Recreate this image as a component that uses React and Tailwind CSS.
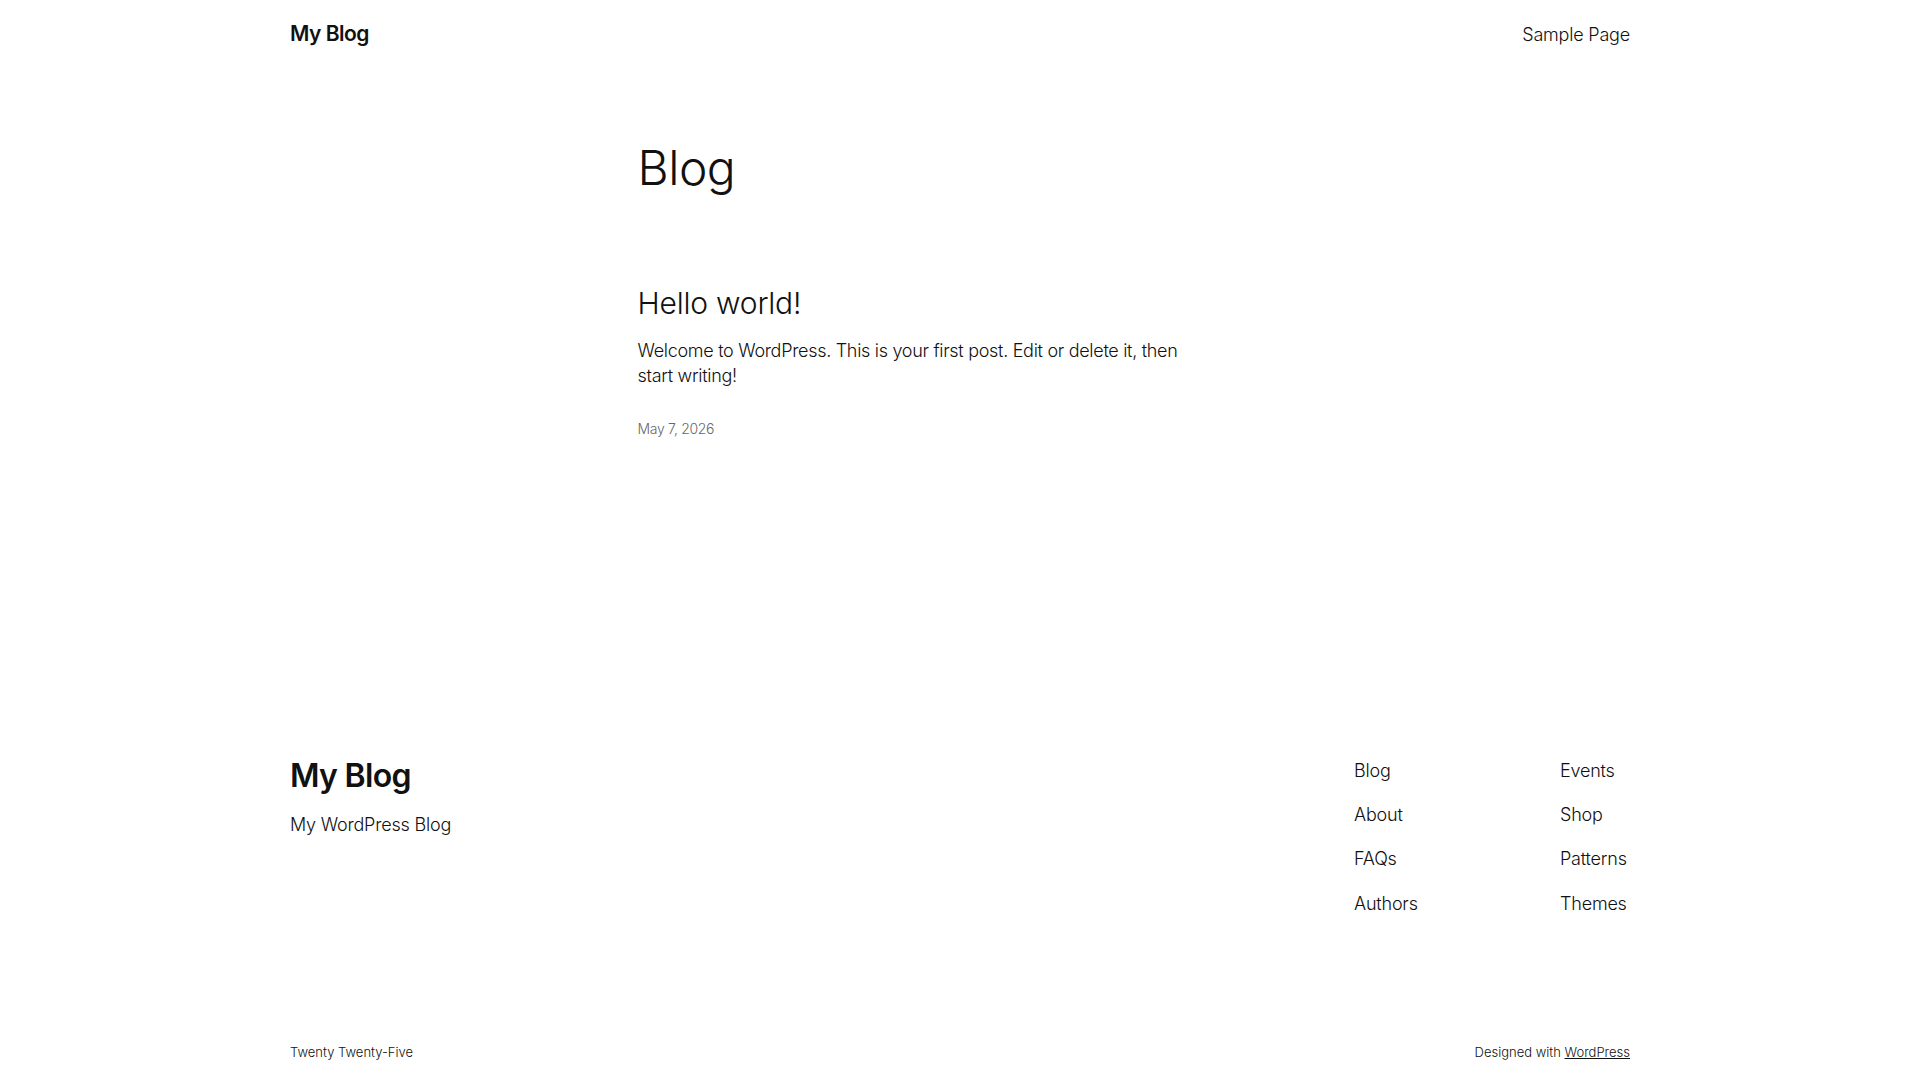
export default function App() {
  const font = { fontFamily: 'Inter, "Noto Sans", sans-serif' };
  return (
    <div className="min-h-screen bg-white text-[#111111] font-light" style={font}>
      <header className="mx-auto flex h-[68px] w-[1340px] items-center justify-between">
        <a className="text-[21px] font-semibold tracking-[-0.5px]">My Blog</a>
        <nav className="text-[18px] font-light tracking-[-0.2px]">Sample Page</nav>
      </header>

      <main className="mx-auto w-[645px] pt-[73px]">
        <h1 className="text-[48px] font-light leading-[1.125] tracking-[-0.5px]">Blog</h1>
        <article className="pt-[90px]">
          <h2 className="text-[30px] font-light leading-[1.2] tracking-[-0.2px]">Hello world!</h2>
          <p className="mt-[17px] max-w-[560px] text-[18px] leading-[1.4] tracking-[-0.3px]">
            Welcome to WordPress. This is your first post. Edit or delete it, then start writing!
          </p>
          <div className="mt-[31px] text-[14px] leading-[1.4] tracking-[-0.3px] text-[#686868]">May 7, 2026</div>
        </article>
      </main>

      <footer className="mx-auto w-[1340px] pt-[318px]">
        <div className="flex justify-between">
          <div className="flex flex-col">
            <div className="text-[32px] font-semibold leading-[1.2] tracking-[-0.7px]">My Blog</div>
            <div className="mt-[17px] text-[18px] leading-[1.4] tracking-[-0.2px]">My WordPress Blog</div>
          </div>
          <div className="flex w-[276px] pt-[1px] text-[18px] leading-[1.4] tracking-[-0.2px]">
            <ul className="flex w-[206px] flex-col gap-[19px]">
              <li>Blog</li>
              <li>About</li>
              <li>FAQs</li>
              <li>Authors</li>
            </ul>
            <ul className="flex flex-col gap-[19px]">
              <li>Events</li>
              <li>Shop</li>
              <li>Patterns</li>
              <li>Themes</li>
            </ul>
          </div>
        </div>
        <div className="mt-[127px] flex justify-between text-[13px] leading-[1.4]">
          <div>Twenty Twenty-Five</div>
          <div>
            Designed with <a className="underline">WordPress</a>
          </div>
        </div>
      </footer>
    </div>
  );
}
